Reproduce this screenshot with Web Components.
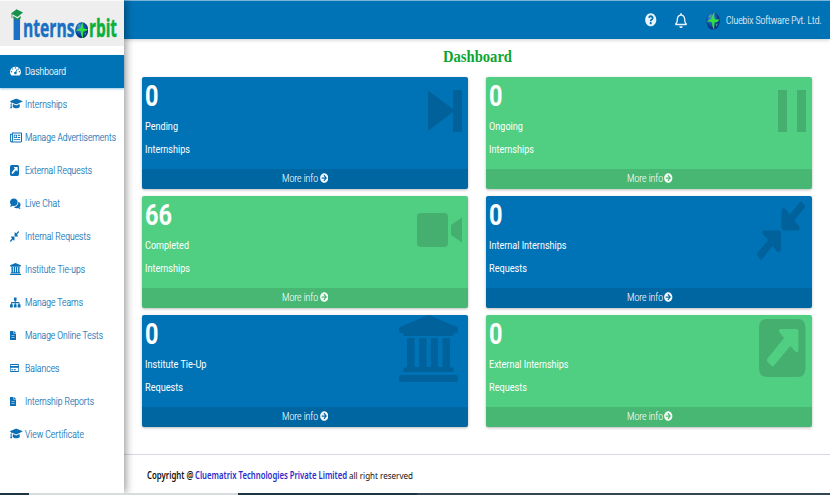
<!DOCTYPE html>
<html lang="en">
<head>
<meta charset="utf-8">
<title>InternsOrbit Dashboard</title>
<style>
html,body{margin:0;height:100%;overflow:hidden;background:#fff}
</style>
</head>
<body>
<orbit-app></orbit-app>
<script>
const ICONS = {
  question:['0 0 512 512','<path d="M504 256c0 136.997-111.043 248-248 248S8 392.997 8 256C8 119.083 119.043 8 256 8s248 111.083 248 248zM262.655 90c-54.497 0-89.255 22.957-116.549 63.758-3.536 5.286-2.353 12.415 2.715 16.258l34.699 26.31c5.205 3.947 12.621 3.008 16.665-2.122 17.864-22.658 30.113-35.797 57.303-35.797 20.429 0 45.698 13.148 45.698 32.958 0 14.976-12.363 22.667-32.534 33.976C247.128 238.528 216 254.941 216 296v4c0 6.627 5.373 12 12 12h56c6.627 0 12-5.373 12-12v-1.333c0-28.462 83.186-29.647 83.186-106.667 0-58.002-60.165-102-116.531-102zM256 338c-25.365 0-46 20.635-46 46 0 25.364 20.635 46 46 46s46-20.636 46-46c0-25.365-20.635-46-46-46z"/>'],
  arrow:['0 0 512 512','<path d="M256 8c137 0 248 111 248 248S393 504 256 504 8 393 8 256 119 8 256 8zm-28.9 143.6l75.5 72.4H120c-13.3 0-24 10.7-24 24v16c0 13.3 10.7 24 24 24h182.600l-75.500 72.400c-9.700 9.300-9.900 24.800-.400 34.300l11 10.900c9.400 9.400 24.600 9.400 33.900 0L404.300 273c9.400-9.400 9.400-24.600 0-33.900L271.600 106.300c-9.400-9.400-24.600-9.400-33.900 0l-11 10.900c-9.500 9.600-9.300 25.100.400 34.400z"/>'],
  bell:['0 0 448 512','<path d="M439.39 362.29c-19.32-20.76-55.47-51.99-55.47-154.29 0-77.7-54.48-139.9-127.94-155.16V32c0-17.67-14.32-32-31.98-32s-31.98 14.33-31.98 32v20.84C118.56 68.1 64.08 130.3 64.08 208c0 102.3-36.15 133.53-55.47 154.29-6 6.45-8.66 14.16-8.61 21.71.11 16.4 12.98 32 32.1 32h383.8c19.12 0 32-15.6 32.1-32 .05-7.55-2.61-15.27-8.61-21.71zM67.53 368c21.22-27.97 44.42-74.33 44.53-159.42 0-.2-.06-.38-.06-.58 0-61.86 50.14-112 112-112s112 50.14 112 112c0 .2-.06.38-.06.58.11 85.1 23.31 131.46 44.53 159.42H67.53zM224 512c35.32 0 63.97-28.65 63.97-64H160.03c0 35.35 28.65 64 63.97 64z"/>'],
  gauge:['0 0 22 20','<path fill-rule="evenodd" d="M3 20A11 11 0 1 1 19 20ZM11 2.4a1.4 1.4 0 1 0 .01 0ZM5.2 5a1.4 1.4 0 1 0 .01 0ZM16.8 5a1.4 1.4 0 1 0 .01 0ZM3 10.5a1.4 1.4 0 1 0 .01 0ZM19 10.5a1.4 1.4 0 1 0 .01 0ZM13.7 6.2 11 12a2.6 2.6 0 1 0 1.6.7L15 7Z"/>'],
  cap:['0 0 24 20','<path d="M.6 5.3 11 1.3q1-.4 2 0l10.4 4q1 .5 0 1.1L13 10.8q-1 .4-2 0L3.4 7.9q-.7 1-.7 2.4c1.1.7 1 1.8.2 2.6L4 18H.4l1.1-5c-.9-.9-.8-2 .1-2.6q0-1.9.8-3.1L.6 6.5q-1-.6 0-1.2ZM5.7 10.6 11 12.7q1 .4 2 0l5.3-2.1.6 4.8c-3.4 3.5-10.4 3.5-13.8 0Z"/>'],
  news:['0 0 24 20','<path fill-rule="evenodd" d="M4 1H23a1 1 0 0 1 1 1V17a2 2 0 0 1-2 2H3a3 3 0 0 1-3-3V4a1 1 0 0 1 1-1H4ZM5.8 2.8V16q0 .7-.4 1.2H22V2.8ZM1.8 4.8V16a1 1 0 0 0 2 0V4.8ZM7.5 5H14V11H7.5ZM9 6.5V9.5H12.5V6.5ZM15.5 5H20.5V6.7H15.5ZM15.5 9H20.5V10.7H15.5ZM7.5 13H20.5V14.7H7.5Z"/>'],
  external:['0 0 46 58','<path fill-rule="evenodd" d="M8 0H38Q46 0 46 9V49Q46 58 38 58H8Q0 58 0 49V9Q0 0 8 0ZM21.5 10Q19 10 20 13L24.8 19 8.4 39.5Q7.4 41 8.4 42.7L12.5 47Q13.5 48 14.8 46.5L31 27 35.8 32.5Q38.5 34.5 39 31V12Q39 10 37 10Z"/>'],
  chat:['0 0 24 20','<path d="M8.8 1C13.7 1 17.5 4 17.5 7.7S13.7 14.5 8.8 14.5q-1.6 0-3.1-.5Q3.4 15.8.5 15.8q-.5-.3 0-.9 1.3-1.4 1.7-3Q0 10 0 7.700C0 4 3.900 1 8.800 1Z"/><path d="M19 7c3 1 5 3.100 5 5.600q0 2.400-2.100 4.100.5 1.500 1.700 2.600.4.700-.2.700-2.700 0-4.800-1.700-5.800 1.400-10-2.100c6.200.2 11-4 10.400-9.200Z"/>'],
  compress:['0 0 48 59','<path d="M6.700 29.500H22Q24 29.500 24 32V49.500Q22.500 52.500 20 50.500L15.500 45 5.300 58Q4 59.500 3 58L.4 54.500Q-.4 53 .4 51.800L11 39 5.800 33Q4.700 30 6.700 29.500ZM24.500 27V9.500Q25.500 5.500 28.500 8L33 13.500 43 .8Q44 0 45 1L47.600 4Q48.500 5.500 47.600 6.800L37.200 19.500 42 25Q43.500 28.500 41 29.500H26.500Q24.500 29.500 24.500 27Z"/>'],
  bank:['0 0 59 67','<path d="M29.500 0 58 12Q59 12.500 59 14V17Q59 18 57.500 18H55Q55 21 53 21H6Q4 21 4 18H1.500Q0 18 0 17V14Q0 12.500 1 12ZM8 23H15.500V52H20V23H27.500V52H31.700V23H39V52H43.500V23H51V52Q55 52 55 57H4Q4 52 8 52ZM2 60H57Q59 60 59 62V65Q59 67 57 67H2Q0 67 0 65V62Q0 60 2 60Z"/>'],
  teams:['0 0 24 20','<path d="M10 1H14Q15 1 15 2V6Q15 7 14 7H13V9.300H20Q21.700 9.300 21.700 11V13H23Q24 13 24 14V18Q24 19 23 19H18.500Q17.500 19 17.500 18V14Q17.500 13 18.500 13H19.800V11.200H13V13H14Q15 13 15 14V18Q15 19 14 19H10Q9 19 9 18V14Q9 13 10 13H11V11.200H4.200V13H5.500Q6.500 13 6.500 14V18Q6.500 19 5.500 19H1Q0 19 0 18V14Q0 13 1 13H2.300V11Q2.300 9.300 4 9.300H11V7H10Q9 7 9 6V2Q9 1 10 1Z"/>'],
  file:['0 0 15 20','<path fill-rule="evenodd" d="M1 0H8.500V5.300H15V19Q15 20 14 20H1Q0 20 0 19V1Q0 0 1 0ZM9.800 0 15 4.200H9.800ZM3.500 9.500V10.500H11.500V9.500ZM3.500 14V15H11.500V14Z"/>'],
  card:['0 0 20 18','<path fill-rule="evenodd" d="M1.500 0H18.500Q20 0 20 1.500V16.500Q20 18 18.500 18H1.500Q0 18 0 16.500V1.500Q0 0 1.500 0ZM1.500 2V4.500H18.500V2ZM1.500 8.500V16H18.500V8.500ZM3 12H7V14H3ZM8.500 12H13V14H8.500Z"/>'],
  next:['0 0 34 42','<path d="M0 .5 25 19V0H34V42H25V22L0 41Z"/>'],
  pause:['0 0 28 42','<path d="M0 0H9V42H0ZM19 0H28V42H19Z"/>'],
  video:['0 0 45 34','<path d="M4 0H27Q31 0 31 4V30Q31 34 27 34H4Q0 34 0 30V4Q0 0 4 0ZM34 12 45 4.500V29.500L34 22Z"/>'],
  globe:['0 0 30 30','<defs><radialGradient id="g" cx=".4" cy=".35"><stop offset="0" stop-color="#4aa0d8"/><stop offset=".6" stop-color="#1a5fb4"/><stop offset="1" stop-color="#0c3688"/></radialGradient></defs><circle cx="15" cy="15" r="14.500" fill="url(#g)"/><path d="M18.500 0Q12 5 13 11.500 7 11 1 17 7 15 13 17 12 24 17.500 30 17.500 23 18.500 17 25 18 29 12.500 23 13 18.500 11.500 16.500 6 18.500 0Z" fill="#30e040"/><path d="M4 9Q8 4 12 3L10 8ZM21 20 26 19 22 25Z" fill="#50b8a0" opacity=".7"/>'],
  hatI:['0 0 13 31','<path d="M2.800 10H9.800V31H2.800Z" fill="#1a70c4"/><path d="M0 4.500 6 .3 13 3.500 7 8ZM2.500 7 7 9.500 10.500 7V9.500Q6 12 2.500 9.500Z" fill="#16914a"/><path d="M1 5V9" stroke="#16914a" stroke-width=".8"/>']
};

/* One line of text squeezed or stretched to an exact width. */
class FitText extends HTMLElement {
  connectedCallback() {
    const w = +this.getAttribute('w'), s = +this.getAttribute('size');
    this.attachShadow({mode:'open'}).innerHTML = `<style>
      :host{display:block;flex:none;width:${w}px;height:${s}px}
      span{display:inline-block;vertical-align:top;white-space:nowrap;font-size:${s}px;line-height:${s}px;transform-origin:0 0}
    </style><span></span>`;
    const span = this.shadowRoot.querySelector('span');
    span.textContent = this.getAttribute('text');
    span.style.transform = `translateY(1px) scaleX(${w / span.getBoundingClientRect().width})`;
  }
}
customElements.define('fit-text', FitText);

class OrbitIcon extends HTMLElement {
  connectedCallback() {
    const [box, body] = ICONS[this.getAttribute('name')];
    const w = this.getAttribute('w'), h = this.getAttribute('h');
    this.attachShadow({mode:'open'}).innerHTML = `<style>
      :host{display:block;flex:none;width:${w}px;height:${h}px}
      svg{display:block;fill:currentColor}
    </style><svg width="${w}" height="${h}" viewBox="${box}" preserveAspectRatio="none">${body}</svg>`;
  }
}
customElements.define('orbit-icon', OrbitIcon);

class OrbitLogo extends HTMLElement {
  connectedCallback() {
    this.attachShadow({mode:'open'}).innerHTML = `<style>
      :host{display:flex;align-items:flex-start;box-sizing:border-box;height:46px;padding:8px 0 0 10.500px;background:#eee;border-top:1px solid #fafafa;font-family:"Open Sans",sans-serif;font-weight:700}
      .a{color:#1a70c4;margin-top:5px}.b{color:#0ab03c;margin-top:5px}
      fit-text{-webkit-text-stroke:.5px currentColor}
      .o{margin:12.500px .5px 0 .5px}
    </style>
    <orbit-icon name="hatI" w="12" h="31"></orbit-icon>
    <fit-text class="a" w="51.500" size="25" text="nterns"></fit-text>
    <orbit-icon class="o" name="globe" w="13.500" h="16.500"></orbit-icon>
    <fit-text class="b" w="28" size="25" text="rbit"></fit-text>`;
  }
}
customElements.define('orbit-logo', OrbitLogo);

class NavItem extends HTMLElement {
  connectedCallback() {
    const a = n => this.getAttribute(n);
    this.attachShadow({mode:'open'}).innerHTML = `<style>
      :host{display:flex;align-items:center;box-sizing:border-box;height:33px;padding:0 0 .6px 10px;color:#0a6fb4;font-weight:300}
      :host([active]){background:#0073b7;color:#fff;box-shadow:0 1px 2px #0073b766}
      .i{width:14.500px;flex:none}
      fit-text{-webkit-text-stroke:.15px currentColor}
    </style><div class="i"><orbit-icon name="${a('icon')}" w="${a('iw')}" h="${a('ih')}"></orbit-icon></div>
    <fit-text w="${a('w')}" size="11.600" text="${a('label')}"></fit-text>`;
  }
}
customElements.define('nav-item', NavItem);

class OrbitSidebar extends HTMLElement {
  connectedCallback() {
    const items = [['gauge',11,9.5,'Dashboard',41],['cap',12.5,11.5,'Internships',42],['news',12,11,'Manage Advertisements',91],
      ['external',9,11,'External Requests',67],['chat',10.5,11,'Live Chat',35],['compress',9,11,'Internal Requests',65.5],
      ['bank',11,12,'Institute Tie-ups',60],['teams',10.5,11,'Manage Teams',58],['file',6,9,'Manage Online Tests',78],
      ['card',9,8,'Balances',34.5],['file',6,9,'Internship Reports',69],['cap',12.5,11.5,'View Certificate',59]];
    this.attachShadow({mode:'open'}).innerHTML = `<style>
      :host{display:block;position:relative;z-index:2;background:#fff;box-shadow:2px 0 8px #0006}
      nav{padding-top:9px}
    </style><orbit-logo></orbit-logo><nav>${items.map(([i,w,h,t,l],n) =>
      `<nav-item ${n ? '' : 'active'} icon="${i}" iw="${w}" ih="${h}" label="${t}" w="${l}"></nav-item>`).join('')}</nav>`;
  }
}
customElements.define('orbit-sidebar', OrbitSidebar);

class OrbitHeader extends HTMLElement {
  connectedCallback() {
    this.attachShadow({mode:'open'}).innerHTML = `<style>
      :host{display:flex;align-items:center;justify-content:flex-end;box-sizing:border-box;height:39px;padding-right:9px;border-top:1px solid #7ab5da;background:#0073b7;color:#eaf4fa;font-weight:300;box-shadow:0 1px 4px #0003}
      .q{margin-right:18px}.b{margin-right:19.500px}.g{margin:2px 5.500px 0 0}
      fit-text{-webkit-text-stroke:.15px currentColor;margin-bottom:1px}
    </style>
    <orbit-icon class="q" name="question" w="11.500" h="13.500"></orbit-icon>
    <orbit-icon class="b" name="bell" w="12" h="15"></orbit-icon>
    <orbit-icon class="g" name="globe" w="14" h="18"></orbit-icon>
    <fit-text w="95.500" size="11.600" text="Cluebix Software Pvt. Ltd."></fit-text>`;
  }
}
customElements.define('orbit-header', OrbitHeader);

class StatCard extends HTMLElement {
  connectedCallback() {
    const a = n => this.getAttribute(n);
    this.attachShadow({mode:'open'}).innerHTML = `<style>
      :host{display:flex;flex-direction:column;height:111.500px;border-radius:2px;overflow:hidden;background:#0073b7;color:#fff;box-shadow:0 1px 3px #0004}
      :host([green]){background:#50ce82}
      .body{flex:1;display:flex;justify-content:space-between;min-height:0}
      .text{padding:4px 0 0 3px}
      .num{font-weight:700;margin-bottom:9.900px}
      .label{margin-bottom:11.500px;font-weight:400}
      .pic{color:#00000026;padding:${a('top')}px ${a('right')}px 0 0}
      .more{height:19.500px;flex:none;display:flex;align-items:center;justify-content:center;gap:1.500px;box-sizing:border-box;padding:0 0 1px 1px;background:#0000001c;font-weight:300;color:#fffffff0}
      .more fit-text{-webkit-text-stroke:.15px currentColor}
    </style>
    <div class="body"><div class="text">
      <fit-text class="num" w="${a('nw')}" size="29" text="${a('num')}"></fit-text>
      <fit-text class="label" w="${a('w1')}" size="11.700" text="${a('l1')}"></fit-text>
      <fit-text class="label" w="${a('w2')}" size="11.700" text="${a('l2')}"></fit-text>
    </div><div class="pic"><orbit-icon name="${a('icon')}" w="${a('iw')}" h="${a('ih')}"></orbit-icon></div></div>
    <div class="more"><fit-text w="36" size="11.700" text="More info"></fit-text><orbit-icon name="arrow" w="8.500" h="10"></orbit-icon></div>`;
  }
}
customElements.define('stat-card', StatCard);

class OrbitFooter extends HTMLElement {
  connectedCallback() {
    this.attachShadow({mode:'open'}).innerHTML = `<style>
      :host{display:block;box-sizing:border-box;height:39px;border-top:1px solid #d6dae0;color:#111;background:#fff;font-family:"Noto Sans",sans-serif}
      .line{height:40px;display:flex;align-items:center;gap:1.500px;padding-left:23px}
      .b{font-weight:600}.link{color:#2a2ecb;font-weight:600}
    </style><div class="line">
      <fit-text class="b" w="46.500" size="9.800" text="Copyright @"></fit-text>
      <fit-text class="link" w="152" size="9.800" text="Cluematrix Technologies Private Limited"></fit-text>
      <fit-text w="64" size="9.800" text="all right reserved"></fit-text>
    </div>`;
  }
}
customElements.define('orbit-footer', OrbitFooter);

class OrbitApp extends HTMLElement {
  connectedCallback() {
    const cards = [
      ['','0','Pending',33,'Internships',45,'next',34,42,13,5.5],
      ['green','0','Ongoing',34,'Internships',45,'pause',28,42,13,6],
      ['green','66','Completed',44,'Internships',45,'video',45,34,17,5.5],
      ['','0','Internal Internships',77.5,'Requests',38,'compress',48,59,5,7],
      ['','0','Institute Tie-Up',61.5,'Requests',38,'bank',59,67,0,9.5],
      ['green','0','External Internships',79.5,'Requests',38,'external',46.5,58,4,6.5]];
    this.attachShadow({mode:'open'}).innerHTML = `<style>
      :host{display:grid;grid-template:1fr 2px / 124px 1fr;width:830px;height:495px;font-family:Roboto,sans-serif;background:#fff}
      .main{display:flex;flex-direction:column;min-height:0}
      .content{flex:1;padding:0 18px;min-height:0}
      .title{display:flex;justify-content:center;padding:7.500px 0 13px 0;color:#0ca52f;font-family:"Liberation Serif",serif;font-weight:700}
      .cards{display:grid;grid-template-columns:325.500px 326px;gap:7.500px 18.500px}
      .strip{grid-column:1/-1;position:relative;z-index:3;display:grid;grid-template-columns:29px 209px 179px 1fr;background:#1d3443}
      .strip i:nth-child(2){background:#d9dcdd}
      .strip i:nth-child(4){background:#324653}
    </style>
    <orbit-sidebar></orbit-sidebar>
    <div class="main"><orbit-header></orbit-header>
      <div class="content"><div class="title"><fit-text w="69" size="17.500" text="Dashboard"></fit-text></div>
      <div class="cards">${cards.map(([g,n,l1,w1,l2,w2,i,iw,ih,t,r]) =>
        `<stat-card ${g} num="${n}" nw="${n.length * 13.5}" l1="${l1}" w1="${w1}" l2="${l2}" w2="${w2}" icon="${i}" iw="${iw}" ih="${ih}" top="${t}" right="${r}"></stat-card>`).join('')}</div></div>
      <orbit-footer></orbit-footer></div>
    <div class="strip"><i></i><i></i><i></i><i></i></div>`;
  }
}
customElements.define('orbit-app', OrbitApp);
</script>
</body>
</html>
